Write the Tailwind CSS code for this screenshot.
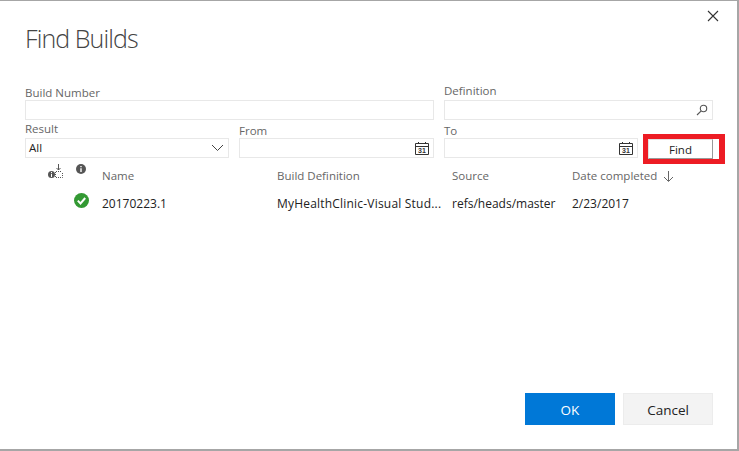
<!DOCTYPE html>
<html lang="en">
<head>
  <meta charset="UTF-8" />
  <title>Find Builds</title>
  <script src="https://cdn.jsdelivr.net/npm/@tailwindcss/browser@4"></script>
</head>
<body class="bg-white font-['Open_Sans',sans-serif] text-[#222]">
  <!-- Dialog -->
  <div class="relative w-[739px] h-[451px] overflow-hidden bg-white border-t border-t-[#a6a6a6] border-r-2 border-r-[#a6a6a6] border-b-2 border-b-[#a6a6a6]">
    <!-- Close -->
    <button class="absolute top-[9px] right-[18px] w-[12px] h-[12px]">
      <svg width="12" height="12" viewBox="0 0 12 12" fill="none" stroke="#333" stroke-width="1.1"><path d="M1 1l10 10M11 1L1 11"/></svg>
    </button>

    <div class="pl-[25px] pt-[20px]">
      <h1 class="text-[25px] leading-[34px] font-light text-[#444] tracking-[-0.9px]">Find Builds</h1>

      <!-- Form row 1 -->
      <div class="flex gap-[10px] mt-[23px] h-[42px]">
        <div class="w-[409px] flex flex-col justify-end">
          <label class="text-[11.5px] leading-[15px] text-[#666]">Build Number</label>
          <div class="h-[20px] border border-[#e8e8e8]"></div>
        </div>
        <div class="w-[269px] flex flex-col justify-end">
          <label class="text-[11.5px] leading-[15px] text-[#666] mb-[2px]">Definition</label>
          <div class="h-[20px] border border-[#e8e8e8] flex items-center justify-end pr-[4px]">
            <svg width="12" height="12" viewBox="0 0 12 12" fill="none" stroke="#555" stroke-width="1.1"><circle cx="7.5" cy="4.5" r="3.2"/><path d="M5.2 6.8L1 11"/></svg>
          </div>
        </div>
      </div>

      <!-- Form row 2 -->
      <div class="flex mt-[1px] h-[37px]">
        <div class="w-[204px] flex flex-col justify-end">
          <label class="text-[11.5px] leading-[15px] text-[#666] mb-[2px]">Result</label>
          <div class="h-[20px] border border-[#e8e8e8] flex items-center justify-between pl-[3px] pr-[4px] text-[11.5px] text-[#222]">
            <span>All</span>
            <svg width="13" height="8" viewBox="0 0 13 8" fill="none" stroke="#444" stroke-width="1"><path d="M1 1l5.5 5.5L12 1"/></svg>
          </div>
        </div>
        <div class="w-[195px] ml-[10px] flex flex-col justify-end">
          <label class="text-[11.5px] leading-[15px] text-[#666]">From</label>
          <div class="h-[20px] border border-[#e8e8e8] flex items-center justify-end pr-[4px]">
            <svg width="14" height="14" viewBox="0 0 14 14" fill="none" stroke="#333"><path d="M.5 2.5h13v11H.5zM.5 5.5h13M3.5 1v2M10.5 1v2"/><text x="7" y="12.4" text-anchor="middle" font-size="7" font-weight="700" fill="#333" stroke="none" font-family="Liberation Sans, sans-serif">31</text></svg>
          </div>
        </div>
        <div class="w-[194px] ml-[10px] flex flex-col justify-end">
          <label class="text-[11.5px] leading-[15px] text-[#666]">To</label>
          <div class="h-[20px] border border-[#e8e8e8] flex items-center justify-end pr-[4px]">
            <svg width="14" height="14" viewBox="0 0 14 14" fill="none" stroke="#333"><path d="M.5 2.5h13v11H.5zM.5 5.5h13M3.5 1v2M10.5 1v2"/><text x="7" y="12.4" text-anchor="middle" font-size="7" font-weight="700" fill="#333" stroke="none" font-family="Liberation Sans, sans-serif">31</text></svg>
          </div>
        </div>
        <!-- Highlighted Find button -->
        <div class="ml-[5px] self-end mb-[-6px] w-[82px] h-[30px] border-[5px] border-r-[6px] border-[#ed1c24] flex">
          <button class="w-[65px] h-[20px] pt-[1px] bg-white border border-[#e2e2e2] border-r-[#999] border-b-[#999] text-[11.5px] leading-[18px] text-[#222]">Find</button>
        </div>
      </div>

      <!-- Table header -->
      <div class="flex items-center mt-[5px] h-[24px] pt-[2px] text-[11.5px] text-[#666]">
        <div class="w-[77px] flex items-start h-full pl-[23px]">
          <svg class="mt-[-1px]" width="15" height="15" viewBox="0 0 15 15" fill="none">
            <circle cx="3.5" cy="10.5" r="3.5" fill="#555"/><path d="M3.5 9.8v3.2M3.5 8v1" stroke="#fff"/>
            <path d="M7.5 8v5.5h7V8M8 7.5h6" stroke="#555" stroke-dasharray="1 1"/>
            <path d="M10.5 0v6M8.5 4l2 2 2-2" stroke="#555"/>
          </svg>
          <svg class="ml-[13px] mt-[-1px]" width="10" height="10" viewBox="0 0 10 10">
            <circle cx="5" cy="5" r="5" fill="#555"/><path d="M5 4.2v3.8M5 2v1.2" stroke="#fff" stroke-width="1.4"/>
          </svg>
        </div>
        <div class="w-[175px]">Name</div>
        <div class="w-[175px]">Build Definition</div>
        <div class="w-[120px]">Source</div>
        <div class="flex items-center gap-[6px]">Date completed
          <svg width="11" height="11" viewBox="0 0 11 11" fill="none" stroke="#666"><path d="M5.5 0v10M1 6l4.5 4.5L10 6"/></svg>
        </div>
      </div>

      <!-- Table row -->
      <div class="flex items-center mt-[4px] h-[24px] pt-[2px] text-[12px] text-[#222]">
        <div class="w-[77px] pl-[49px] h-full">
          <svg width="15" height="15" viewBox="0 0 15 15" fill="none">
            <circle cx="7.5" cy="7.5" r="7.5" fill="#339933"/><path d="M3.8 7.6l2.7 2.8 4.7-5.4" stroke="#fff" stroke-width="2"/>
          </svg>
        </div>
        <div class="w-[175px]">20170223.1</div>
        <div class="w-[175px] tracking-[0.2px]">MyHealthClinic-Visual Stud...</div>
        <div class="w-[120px]">refs/heads/master</div>
        <div>2/23/2017</div>
      </div>
    </div>

    <!-- Footer buttons -->
    <div class="absolute top-[392px] left-[525px] flex gap-[8px] text-[13.5px]">
      <button class="w-[90px] h-[32px] pt-[3px] bg-[#0078d7] text-white">OK</button>
      <button class="w-[90px] h-[32px] pt-[3px] bg-[#f3f3f3] border border-[#ececec] text-[#222]">Cancel</button>
    </div>
  </div>
</body>
</html>
